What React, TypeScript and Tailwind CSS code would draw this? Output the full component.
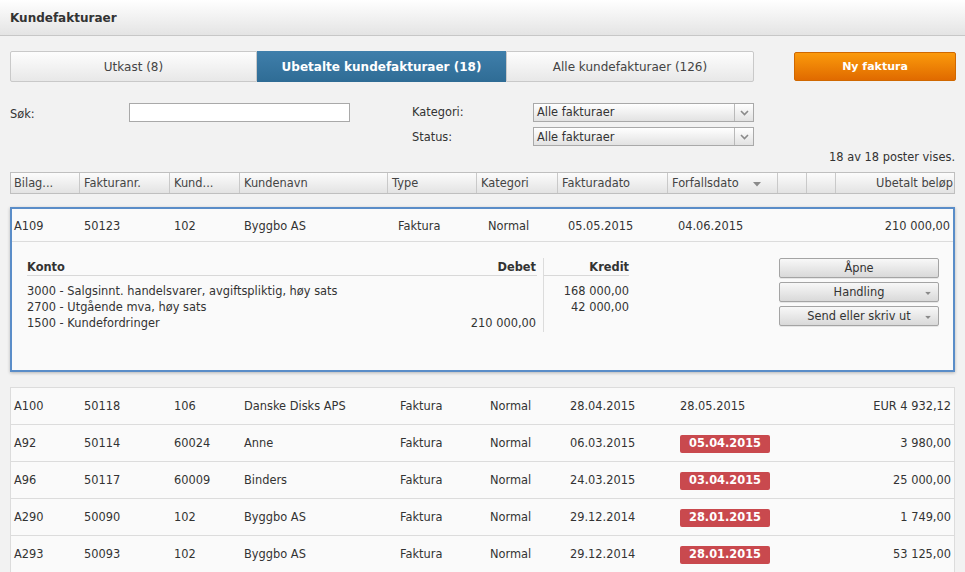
import React from "react";

const FONT = { fontFamily: '"DejaVu Sans", Verdana, sans-serif' };

const headerCols = [
  { w: 69, label: "Bilag..." },
  { w: 90, label: "Fakturanr." },
  { w: 70, label: "Kund..." },
  { w: 148, label: "Kundenavn" },
  { w: 89, label: "Type" },
  { w: 81, label: "Kategori" },
  { w: 110, label: "Fakturadato" },
  { w: 110, label: "Forfallsdato", sort: true },
  { w: 29, label: "" },
  { w: 29, label: "" },
  { w: 121, label: "Ubetalt beløp", right: true },
];

type Row = {
  bilag: string;
  nr: string;
  kunde: string;
  navn: string;
  dato: string;
  forfall: string;
  overdue?: boolean;
  belop: string;
};

const rows: Row[] = [
  { bilag: "A100", nr: "50118", kunde: "106", navn: "Danske Disks APS", dato: "28.04.2015", forfall: "28.05.2015", belop: "EUR 4 932,12" },
  { bilag: "A92", nr: "50114", kunde: "60024", navn: "Anne", dato: "06.03.2015", forfall: "05.04.2015", overdue: true, belop: "3 980,00" },
  { bilag: "A96", nr: "50117", kunde: "60009", navn: "Binders", dato: "24.03.2015", forfall: "03.04.2015", overdue: true, belop: "25 000,00" },
  { bilag: "A290", nr: "50090", kunde: "102", navn: "Byggbo AS", dato: "29.12.2014", forfall: "28.01.2015", overdue: true, belop: "1 749,00" },
  { bilag: "A293", nr: "50093", kunde: "102", navn: "Byggbo AS", dato: "29.12.2014", forfall: "28.01.2015", overdue: true, belop: "53 125,00" },
];

function Caret({ className = "" }: { className?: string }) {
  return (
    <svg width="8" height="5" viewBox="0 0 8 5" className={className}>
      <path d="M0 0 L8 0 L4 4.5 Z" fill="#8a8a8a" />
    </svg>
  );
}

function Chevron() {
  return (
    <svg width="9" height="6" viewBox="0 0 9 6">
      <path d="M1 1 L4.5 4.5 L8 1" stroke="#8a8a8a" strokeWidth="1.6" fill="none" />
    </svg>
  );
}

function Select() {
  return (
    <div className="flex h-[19px] w-[221px] border border-[#a9a9a9] bg-gradient-to-b from-[#ffffff] to-[#e2e2e2] text-[#333]">
      <div className="flex flex-1 items-center pl-[3px] pt-[1px]">Alle fakturaer</div>
      <div className="flex w-[19px] items-center justify-center border-l border-[#b9b9b9]">
        <Chevron />
      </div>
    </div>
  );
}

function GrayButton({ label, caret }: { label: string; caret?: boolean }) {
  return (
    <div className="relative flex h-[20px] w-[160px] items-center justify-center rounded-[2px] border border-[#a4a4a4] bg-gradient-to-b from-[#f8f8f8] to-[#d9d9d9] pt-[1px] text-[#333] shadow-[0_1px_0_rgba(0,0,0,0.08)]">
      {label}
      {caret && <Caret className="absolute right-[6px] top-[8px] scale-75" />}
    </div>
  );
}

export default function App() {
  const gridTpl = "grid grid-cols-[69px_90px_70px_148px_89px_81px_110px_110px_1fr]";
  return (
    <div className="min-h-[572px] w-[965px] overflow-hidden bg-[#f2f2f2] text-[11.4px] text-[#333]" style={FONT}>
      {/* top bar */}
      <div className="flex h-[36px] items-center border-b border-[#c7c7c7] bg-gradient-to-b from-[#ffffff] to-[#e4e4e4] pl-[10px] text-[12px] font-bold text-[#333]">
        Kundefakturaer
      </div>

      <div className="px-[10px]">
        {/* tabs */}
        <div className="mt-[15px] flex items-start">
          <div className="flex h-[31px] w-[247px] shrink-0 items-center justify-center rounded-l-[2px] border border-[#c9c9c9] bg-gradient-to-b from-[#fdfdfd] to-[#e8e8e8] pt-[1px] text-[12px] text-[#444]">
            Utkast (8)
          </div>
          <div className="flex h-[31px] w-[249px] shrink-0 items-center justify-center bg-gradient-to-b from-[#3f7fab] to-[#2f6c95] pt-[1px] text-[12px] font-bold text-white">
            Ubetalte kundefakturaer (18)
          </div>
          <div className="flex h-[31px] w-[248px] shrink-0 items-center justify-center rounded-r-[2px] border border-[#c9c9c9] bg-gradient-to-b from-[#fdfdfd] to-[#e8e8e8] pt-[1px] text-[12px] text-[#444]">
            Alle kundefakturaer (126)
          </div>
          <div className="ml-[40px] mt-[1px] flex h-[29px] w-[162px] shrink-0 items-center justify-center rounded-[2px] border border-[#d06800] bg-gradient-to-b from-[#fb9a0c] to-[#e06a00] pt-[2px] text-[11px] font-bold text-white">
            Ny faktura
          </div>
        </div>

        {/* filters */}
        <div className="mt-[21px] flex">
          <div className="flex w-[402px] items-start">
            <div className="w-[119px] pt-[3px]">Søk:</div>
            <div className="h-[19px] w-[221px] border border-[#a9a9a9] bg-white" />
          </div>
          <div className="flex flex-col gap-[5px]">
            <div className="flex items-center">
              <div className="w-[121px] pt-[1px]">Kategori:</div>
              <Select />
            </div>
            <div className="flex items-center">
              <div className="w-[121px] pt-[2px]">Status:</div>
              <Select />
            </div>
          </div>
        </div>
        <div className="mt-[4px] text-right leading-[14px]">18 av 18 poster vises.</div>

        {/* table header */}
        <div className="mt-[8px] flex h-[22px] border border-[#bfbfbf] bg-gradient-to-b from-[#fcfcfc] to-[#e3e3e3] text-[#444]">
          {headerCols.map((c, i) => (
            <div
              key={i}
              style={{ width: c.w - (i === 0 ? 1 : 0) }}
              className={`flex shrink-0 items-center pt-[1px] ${i > 0 ? "border-l border-[#c9c9c9]" : ""} ${c.right ? "justify-end pr-[3px]" : i === 0 ? "pl-[3px]" : "pl-[4px]"}`}
            >
              {c.label}
              {c.sort && <Caret className="ml-[14px] mt-[1px]" />}
            </div>
          ))}
        </div>

        {/* expanded row */}
        <div className="mt-[13px] h-[165px] border-2 border-[#5a8dc8] bg-[#fafafa] shadow-[0_1px_3px_rgba(0,0,0,0.25)]">
          <div className={`${gridTpl} h-[33px] items-center border-b border-[#dcdcdc] pt-[2px]`}>
            <div className="pl-[2px]">A109</div>
            <div className="pl-[3px]">50123</div>
            <div className="pl-[3px]">102</div>
            <div className="pl-[3px]">Byggbo AS</div>
            <div className="pl-[9px]">Faktura</div>
            <div className="pl-[10px]">Normal</div>
            <div className="pl-[9px]">05.05.2015</div>
            <div className="pl-[9px]">04.06.2015</div>
            <div className="pr-[3px] text-right">210 000,00</div>
          </div>
          <div className="flex pl-[15px] pr-[14px] pt-[16px]">
            <div className="w-[510px] pt-[1px]">
              <div className="flex h-[17px] items-start border-b border-[#d8d8d8] font-bold">
                <div className="flex-1">Konto</div>
                <div className="pr-[1px]">Debet</div>
              </div>
              <div className="pt-[7px] leading-[16px]">
                <div>3000 - Salgsinnt. handelsvarer, avgiftspliktig, høy sats</div>
                <div>2700 - Utgående mva, høy sats</div>
                <div className="flex">
                  <div className="flex-1">1500 - Kundefordringer</div>
                  <div className="pr-[1px]">210 000,00</div>
                </div>
              </div>
            </div>
            <div className="ml-[6px] h-[74px] w-[86px] border-l border-[#dcdcdc] pt-[1px]">
              <div className="h-[17px] border-b border-[#d8d8d8] text-right font-bold">Kredit</div>
              <div className="pt-[7px] text-right leading-[16px]">
                <div>168 000,00</div>
                <div>42 000,00</div>
              </div>
            </div>
            <div className="ml-auto flex flex-col gap-[4px]">
              <GrayButton label="Åpne" />
              <GrayButton label="Handling" caret />
              <GrayButton label="Send eller skriv ut" caret />
            </div>
          </div>
        </div>

        {/* list rows */}
        <div className="mt-[15px] border-l border-r border-t border-[#dcdcdc] bg-[#fafafa]">
          {rows.map((r, i) => (
            <div key={i} className={`${gridTpl} h-[37px] items-center border-b border-[#dcdcdc] pt-[1px]`}>
              <div className="pl-[3px]">{r.bilag}</div>
              <div className="pl-[4px]">{r.nr}</div>
              <div className="pl-[4px]">{r.kunde}</div>
              <div className="pl-[4px]">{r.navn}</div>
              <div className="pl-[12px]">Faktura</div>
              <div className="pl-[13px]">Normal</div>
              <div className="pl-[12px]">{r.dato}</div>
              <div className="pl-[12px]">
                {r.overdue ? (
                  <span className="inline-flex h-[18px] w-[90px] items-center justify-center rounded-[2px] bg-[#c9494e] text-[11.4px] font-bold text-white">
                    {r.forfall}
                  </span>
                ) : (
                  r.forfall
                )}
              </div>
              <div className="pr-[3px] text-right">{r.belop}</div>
            </div>
          ))}
        </div>
      </div>
    </div>
  );
}
